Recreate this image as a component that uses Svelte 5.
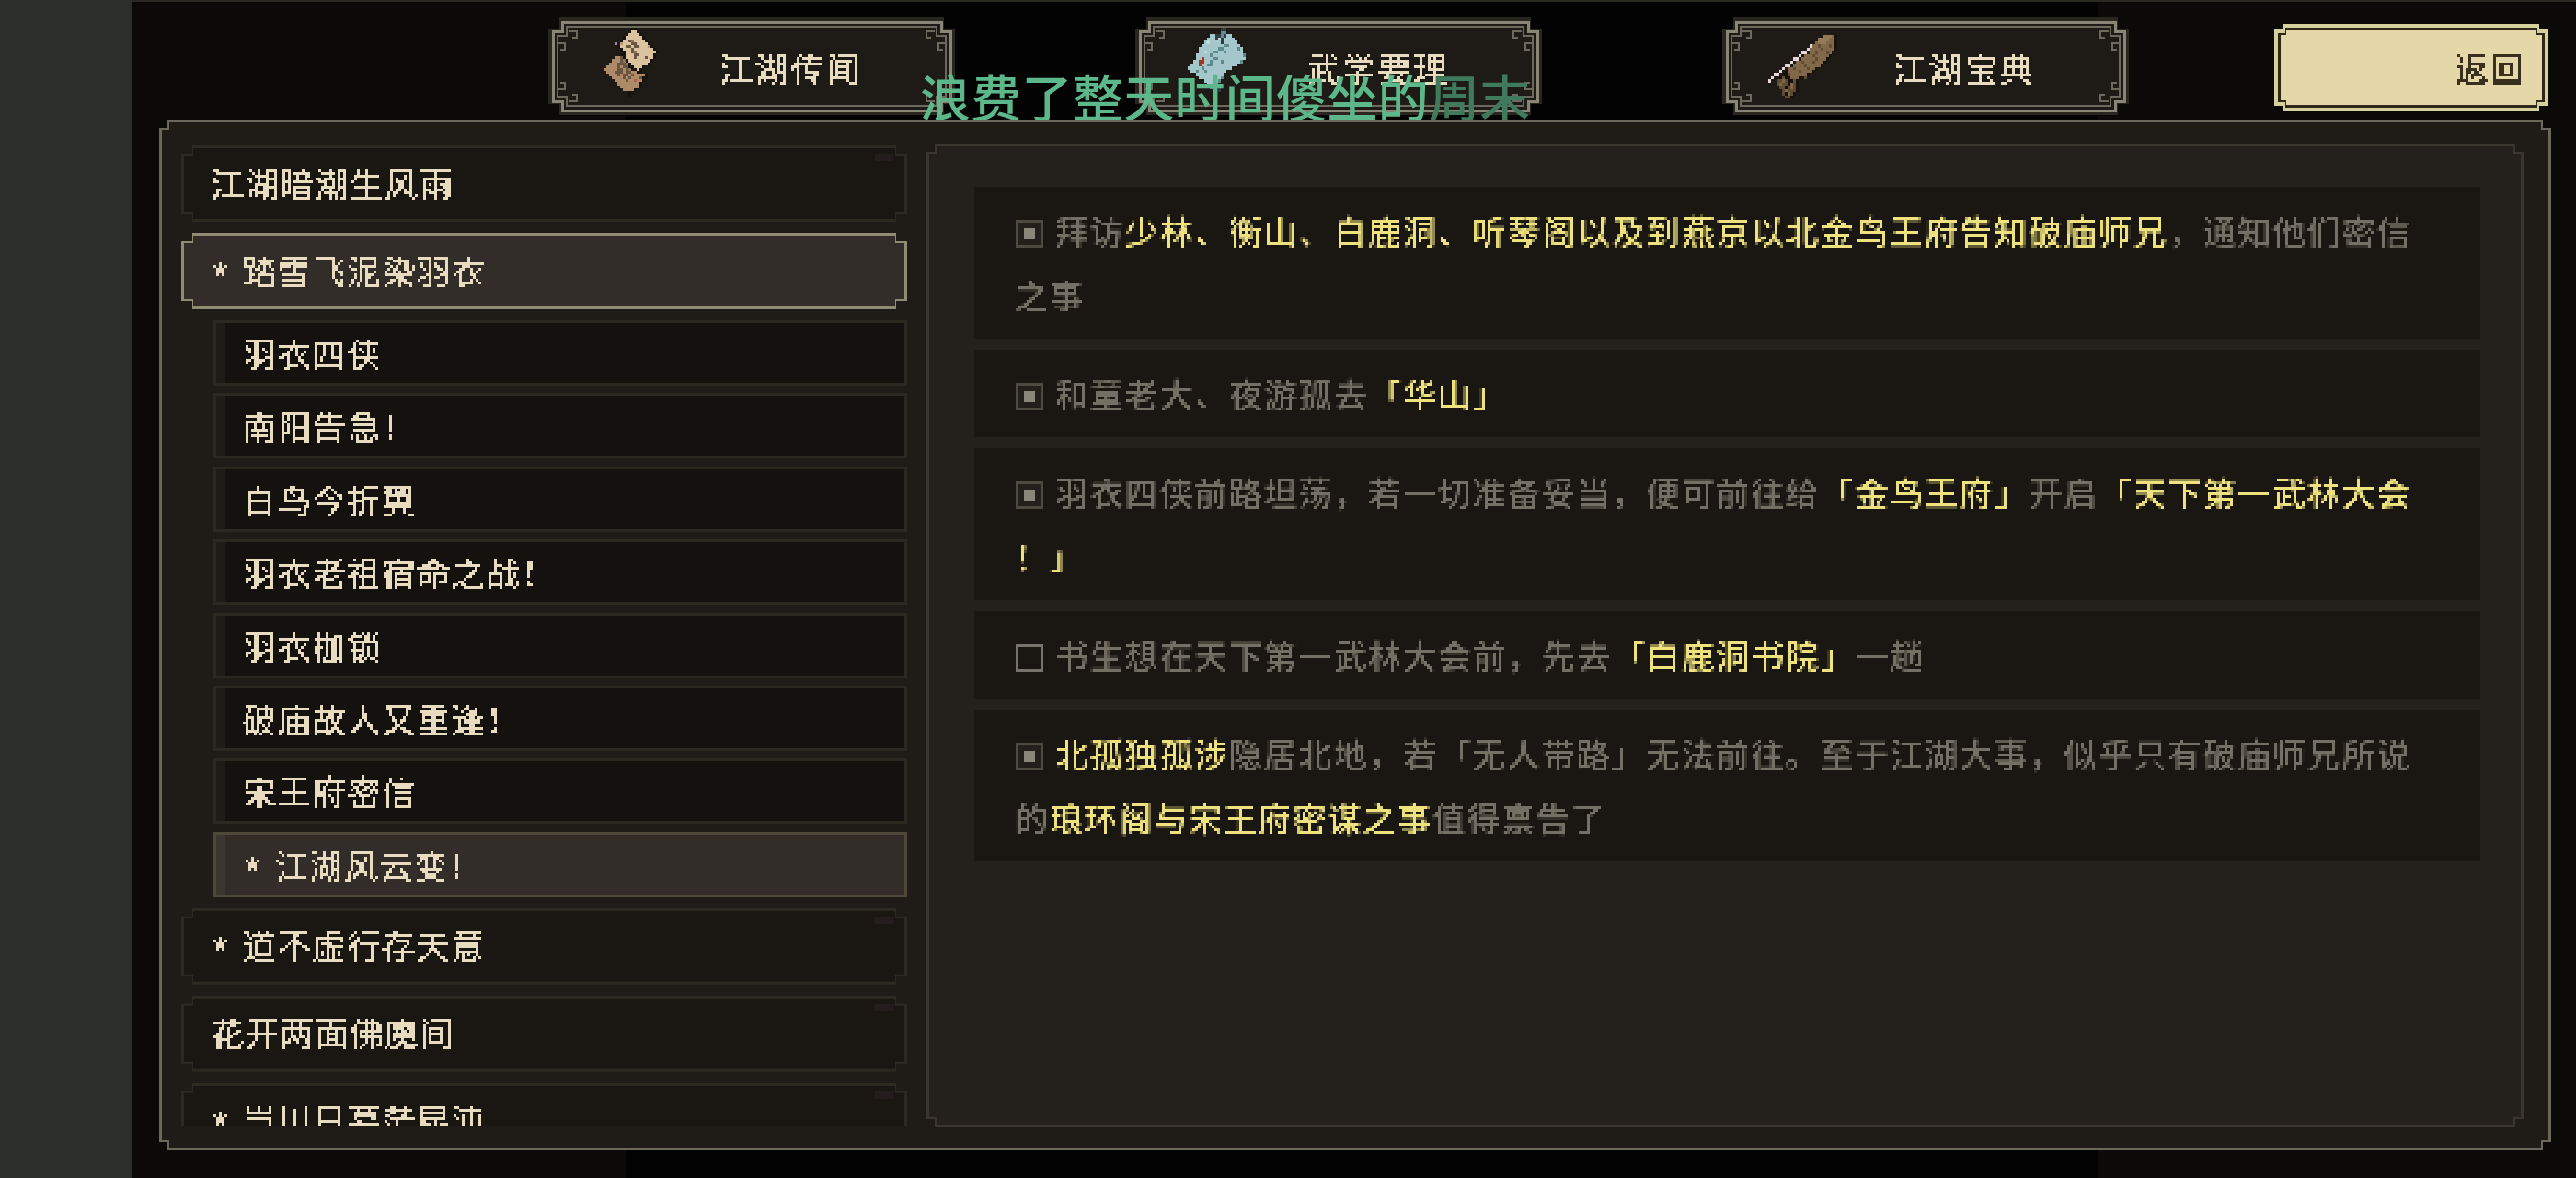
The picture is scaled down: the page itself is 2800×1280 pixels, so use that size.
<script>
	const W = 442;
	const H = 106;

	// stepped outline of a tab frame, i = inset from the outer edge
	function framePath(i, s = 10) {
		return `M${i + s} ${i}H${W - i - s}V${i + s}H${W - i}V${H - i - s}H${W - i - s}V${H - i}H${i + s}V${H - i - s}H${i}V${i + s}H${i + s}Z`;
	}

	const corners = [
		'',
		`translate(${W},0) scale(-1,1)`,
		`translate(0,${H}) scale(1,-1)`,
		`translate(${W},${H}) scale(-1,-1)`
	];

	const palette = {
		k: '#17120d', a: '#dcc3a0', b: '#b89b7a', c: '#ae8b68', d: '#6a5540', e: '#8a7556', r: '#b0604f', p: '#9a86a0',
		t: '#a3c7ca', l: '#bfdadc', g: '#5f8a90', x: '#2f3b3e', R: '#a8352a',
		n: '#806848', m: '#957a55', o: '#5d4a33', w: '#e8d5dc', q: '#644e33'
	};

	const scrollIcon = [
		'..........kk..........',
		'.........kaak.........',
		'........kaaaak........',
		'.......kaaaaaak.......',
		'......kaadeaaaak......',
		'....p.baaaddaaaak.....',
		'.....kaaddaddaaabk....',
		'......kaaadaaaaaaak...',
		'.......kaadeaaaaaaak..',
		'......kkaaaddaaaaak...',
		'....ccdkaaadaaadaak...',
		'...cccdekaaaaaaaak....',
		'..cccdddekaaaaaak.....',
		'.ccccdcddkkaaak.......',
		'cccccddcdekkak........',
		'.cccdddcddcckk........',
		'..cccdcddcdcccck......',
		'...ccccdcdcccdkk......',
		'....ccccdccrcck.......',
		'.....cccccccck........',
		'......ccccccck........',
		'.......cccck..........',
		'.........kk...........',
		'.........k............'
	];

	const bookIcon = [
		'............xx..........',
		'............gg..........',
		'........ttxxgxtt........',
		'.......tttxlxtttt.......',
		'......tlttttxttttt......',
		'.....ttttttttggtttt.....',
		'....tttttttggtttttgt....',
		'....ttlttggttgtttttt....',
		'...tttttgtttttttttttg...',
		'...ttRtttggtttttttttt...',
		'..ttRRttgtttgttttttg....',
		'.tttRttggttttttttt......',
		'tttttgtttttttttt........',
		'.ttgttgttttttt..........',
		'...tttttttttt...........',
		'....ttttttttg...........',
		'......tttttg............',
		'.......ttgg.............',
		'........gg.x............',
		'...........x............'
	];

	const rollIcon = [
		'....................mmmnk.',
		'..................mmmmnnk.',
		'.................nmmmnnnk.',
		'...............wnnqnnnqnk.',
		'..............wnnnnqnnnnk.',
		'............ww.nnqnnnqnk..',
		'...........w.nnnqnnnnnk...',
		'.........ww.nnnnnqnnnk....',
		'........w.nnqnnnqnnnk.....',
		'......ww.nnnnqnnnnnk......',
		'.....w.nnqnnnnqnnk........',
		'....w.knnnnqnnnnk.........',
		'..ww.kkonnnnnnk...........',
		'.w..kqkknnnk.o............',
		'w..oqnokkqk...............',
		'...onqoknok...............',
		'....oqkonok...............',
		'.....onoqok...............',
		'.....oknok................',
		'......ook.................'
	];

	function cells(rows) {
		const out = [];
		rows.forEach((row, y) => {
			[...row].forEach((ch, x) => {
				if (palette[ch]) out.push({ x, y, c: palette[ch] });
			});
		});
		return out;
	}

	const tabs = [
		{ label: '江湖传闻', rows: scrollIcon, cols: 22, w: 66, h: 75, nudge: 'icon-a' },
		{ label: '武学要理', rows: bookIcon, cols: 24, w: 72, h: 70, nudge: 'icon-b' },
		{ label: '江湖宝典', rows: rollIcon, cols: 26, w: 78, h: 69, nudge: 'icon-c' }
	];

	const subs = ['羽衣四侠', '南阳告急！', '白鸟今折翼', '羽衣老祖宿命之战！', '羽衣枷锁', '破庙故人又重逢！', '宋王府密信'];
</script>

{#snippet tabFrame()}
	<svg class="tab-frame" width={W} height={H} viewBox="0 0 {W} {H}" shape-rendering="crispEdges">
		<path d={framePath(0, 12)} fill="#29261f" />
		<path d={framePath(5)} fill="#1e1a15" stroke="#8a8677" stroke-width="3" />
		<path d={framePath(10)} fill="none" stroke="#6d695d" stroke-width="2" />
		{#each corners as t}
			<g transform={t} fill="none" stroke="#6d695d" stroke-width="2">
				<path d="M22 15H31V22H26" />
				<path d="M11 28H18V35H13" />
			</g>
		{/each}
	</svg>
{/snippet}

<svg class="defs" width="0" height="0" aria-hidden="true">
	<filter id="px" x="0" y="0" width="100%" height="100%" color-interpolation-filters="sRGB">
		<feFlood x="1" y="1" width="1" height="1" flood-color="#000" />
		<feComposite width="3" height="3" />
		<feTile result="grid" />
		<feComposite in="SourceGraphic" in2="grid" operator="in" />
		<feMorphology operator="dilate" radius="1" />
		<feComponentTransfer>
			<feFuncA type="discrete" tableValues="0 1 1 1" />
		</feComponentTransfer>
		<feGaussianBlur stdDeviation="0.4" />
	</filter>
</svg>

<div class="page">
	<div class="strip"></div>
	<div class="stage">
		<header class="top">
			<div class="tabs">
				{#each tabs as tab}
					<div class="tab">
						{@render tabFrame()}
						<svg class="icon {tab.nudge}" width={tab.w} height={tab.h} viewBox="0 0 {tab.cols} {tab.rows.length}" preserveAspectRatio="none" shape-rendering="crispEdges">
							{#each cells(tab.rows) as p}
								<rect x={p.x} y={p.y} width="1" height="1" fill={p.c} />
							{/each}
						</svg>
						<span class="tab-label px">{tab.label}</span>
					</div>
				{/each}
			</div>
			<div class="back">
				<div class="back-line">
					<div class="back-fill"><span class="px">返回</span></div>
				</div>
			</div>
		</header>

		<div class="toast">浪费了整天时间傻坐的<span class="toast-fade">周末</span></div>

		<section class="panel">
			<div class="panel-in">
				<nav class="list">
					<div class="item"><div class="item-in"><span class="px">江湖暗潮生风雨</span></div></div>
					<div class="item active"><div class="item-in"><span class="px"><i>*</i>踏雪飞泥染羽衣</span></div></div>
					<div class="subs">
						{#each subs as s}
							<div class="sub"><span class="px">{s}</span></div>
						{/each}
						<div class="sub current"><span class="px"><i>*</i>江湖风云变！</span></div>
					</div>
					<div class="item"><div class="item-in"><span class="px"><i>*</i>道不虚行存天意</span></div></div>
					<div class="item"><div class="item-in"><span class="px">花开两面佛魔间</span></div></div>
					<div class="item"><div class="item-in"><span class="px"><i>*</i>岂川日暮茫昆沌</span></div></div>
				</nav>

				<div class="detail">
					<div class="detail-in">
						<p class="row px"><b class="box on"></b>拜访<em>少林、衡山、白鹿洞、听琴阁以及到燕京以北金鸟王府告知破庙师兄</em>，通知他们密信之事</p>
						<p class="row px"><b class="box on"></b>和童老大、夜游孤去<em>「华山」</em></p>
						<p class="row px"><b class="box on"></b>羽衣四侠前路坦荡，若一切准备妥当，便可前往给<em>「金鸟王府」</em>开启<em>「天下第一武林大会！」</em></p>
						<p class="row px"><b class="box"></b>书生想在天下第一武林大会前，先去<em>「白鹿洞书院」</em>一趟</p>
						<p class="row px"><b class="box on"></b><em>北孤独孤涉</em>隐居北地，若「无人带路」无法前往。至于江湖大事，似乎只有破庙师兄所说的<em>琅环阁与宋王府密谋之事</em>值得禀告了</p>
					</div>
				</div>
			</div>
		</section>
	</div>
</div>

<style>
	:global(body) {
		margin: 0;
		background: #0b0a09;
	}

	.defs {
		position: absolute;
	}

	.page {
		display: flex;
		width: 2800px;
		height: 1280px;
		overflow: hidden;
		font-family: 'Noto Sans CJK SC', 'Noto Sans', sans-serif;
		font-size: 36px;
		font-weight: 400;
		letter-spacing: 1.8px;
		position: relative;
	}

	.px {
		filter: url(#px);
	}

	.strip {
		width: 143px;
		flex: none;
		background: #2c2e2a;
	}

	.stage {
		flex: 1;
		box-sizing: border-box;
		border-top: 2px solid #292823;
		background: linear-gradient(to right, #0b0a09 537px, #040303 537px, #040303 2137px, #0b0a09 2137px);
	}

	/* Top bar */
	.top {
		display: flex;
		height: 128px;
		box-sizing: border-box;
		padding: 17px 0 0 453px;
	}

	.tabs {
		display: flex;
		gap: 196px;
	}

	.tab {
		position: relative;
		width: 442px;
		height: 106px;
		display: flex;
		align-items: center;
		padding-left: 186px;
		box-sizing: border-box;
		color: #e7dcc0;
	}

	.tab-frame {
		position: absolute;
		left: 0;
		top: 0;
	}

	.tab-label {
		position: relative;
		display: block;
		line-height: 52px;
		margin-top: 2px;
		letter-spacing: 2.8px;
	}

	.icon {
		position: absolute;
	}

	.icon-a {
		left: 60px;
		top: 11px;
	}

	.icon-b {
		left: 57px;
		top: 11px;
	}

	.icon-c {
		left: 50px;
		top: 19px;
	}

	.back {
		margin: 7px 0 0 158px;
		width: 298px;
		height: 95px;
		background: #d6d19c;
		padding: 4px;
		box-sizing: border-box;
		clip-path: polygon(10px 0, calc(100% - 10px) 0, calc(100% - 10px) 6px, 100% 6px, 100% calc(100% - 6px), calc(100% - 10px) calc(100% - 6px), calc(100% - 10px) 100%, 10px 100%, 10px calc(100% - 6px), 0 calc(100% - 6px), 0 6px, 10px 6px);
	}

	.back-line {
		height: 100%;
		background: #2e2818;
		padding: 3px;
		box-sizing: border-box;
		clip-path: polygon(8px 0, calc(100% - 8px) 0, calc(100% - 8px) 6px, 100% 6px, 100% calc(100% - 6px), calc(100% - 8px) calc(100% - 6px), calc(100% - 8px) 100%, 8px 100%, 8px calc(100% - 6px), 0 calc(100% - 6px), 0 6px, 8px 6px);
	}

	.back-fill {
		height: 100%;
		background: #e5d8a8;
		color: #3a3020;
		display: flex;
		align-items: center;
		justify-content: flex-end;
		padding-right: 18px;
		box-sizing: border-box;
		font-weight: 500;
		clip-path: polygon(6px 0, calc(100% - 6px) 0, calc(100% - 6px) 5px, 100% 5px, 100% calc(100% - 5px), calc(100% - 6px) calc(100% - 5px), calc(100% - 6px) 100%, 6px 100%, 6px calc(100% - 5px), 0 calc(100% - 5px), 0 5px, 6px 5px);
	}

	.back-fill span {
		display: block;
		line-height: 52px;
		margin-top: -2px;
		letter-spacing: 2.4px;
	}

	/* Toast over the tabs */
	.toast {
		position: absolute;
		left: 1000px;
		top: 63px;
		font-size: 55px;
		font-weight: 500;
		letter-spacing: 0.3px;
		line-height: 80px;
		color: #5cb88a;
		white-space: nowrap;
	}

	.toast-fade {
		color: #3e7a5b;
	}

	/* Main panel */
	.panel {
		margin-left: 30px;
		width: 2600px;
		height: 1120px;
		padding: 3px;
		box-sizing: border-box;
		background: #6b675a;
		clip-path: polygon(9px 0, calc(100% - 9px) 0, calc(100% - 9px) 9px, 100% 9px, 100% calc(100% - 9px), calc(100% - 9px) calc(100% - 9px), calc(100% - 9px) 100%, 9px 100%, 9px calc(100% - 9px), 0 calc(100% - 9px), 0 9px, 9px 9px);
	}

	.panel-in {
		height: 100%;
		background: #1f1c17;
		display: flex;
		gap: 21px;
		padding: 23px 27px 22px 21px;
		box-sizing: border-box;
		clip-path: polygon(8px 0, calc(100% - 8px) 0, calc(100% - 8px) 8px, 100% 8px, 100% calc(100% - 8px), calc(100% - 8px) calc(100% - 8px), calc(100% - 8px) 100%, 8px 100%, 8px calc(100% - 8px), 0 calc(100% - 8px), 0 8px, 8px 8px);
	}

	.list {
		width: 789px;
		flex: none;
		margin: 2px 0;
		display: flex;
		flex-direction: column;
		gap: 12px;
		overflow: hidden;
		color: #e7dcc0;
	}

	.list span {
		display: block;
		line-height: 52px;
		margin-top: -4px;
	}

	.list i {
		display: inline-block;
		width: 35px;
		font-style: normal;
		font-size: 44px;
		line-height: 40px;
		position: relative;
		top: 11px;
	}

	.item {
		height: 83px;
		flex: none;
		padding: 3px;
		box-sizing: border-box;
		background: #2c2921;
		clip-path: polygon(12px 0, calc(100% - 12px) 0, calc(100% - 12px) 9px, 100% 9px, 100% calc(100% - 9px), calc(100% - 12px) calc(100% - 9px), calc(100% - 12px) 100%, 12px 100%, 12px calc(100% - 9px), 0 calc(100% - 9px), 0 9px, 12px 9px);
	}

	.item-in {
		height: 100%;
		display: flex;
		align-items: center;
		padding-left: 29px;
		box-sizing: border-box;
		background: linear-gradient(#241c1d, #241c1d) no-repeat right 12px top 6px / 20px 8px, #1a1713;
		clip-path: polygon(10px 0, calc(100% - 10px) 0, calc(100% - 10px) 8px, 100% 8px, 100% calc(100% - 8px), calc(100% - 10px) calc(100% - 8px), calc(100% - 10px) 100%, 10px 100%, 10px calc(100% - 8px), 0 calc(100% - 8px), 0 8px, 10px 8px);
	}

	.active {
		background: #8f8b75;
	}

	.active .item-in {
		background: #322d28;
	}

	.subs {
		margin-left: 35px;
		display: flex;
		flex-direction: column;
		gap: 8.4px;
	}

	.sub {
		height: 71px;
		flex: none;
		box-sizing: border-box;
		border: 3px solid #2b2820;
		padding-left: 29px;
		display: flex;
		align-items: center;
		background: linear-gradient(to right, #1f1c17 10px, #14110e 10px);
	}

	.list .sub span {
		margin-top: -1px;
	}

	.current {
		border-color: #4d483a;
		background: linear-gradient(to right, #3a3630 10px, #322d28 10px);
	}

	/* Task detail */
	.detail {
		flex: 1;
		padding: 3px;
		box-sizing: border-box;
		background: #3a362d;
		clip-path: polygon(9px 0, calc(100% - 9px) 0, calc(100% - 9px) 9px, 100% 9px, 100% calc(100% - 9px), calc(100% - 9px) calc(100% - 9px), calc(100% - 9px) 100%, 9px 100%, 9px calc(100% - 9px), 0 calc(100% - 9px), 0 9px, 9px 9px);
	}

	.detail-in {
		height: 100%;
		background: #24201b;
		box-sizing: border-box;
		padding: 44px 44px 0 49px;
		display: flex;
		flex-direction: column;
		gap: 12px;
		clip-path: polygon(8px 0, calc(100% - 8px) 0, calc(100% - 8px) 8px, 100% 8px, 100% calc(100% - 8px), calc(100% - 8px) calc(100% - 8px), calc(100% - 8px) 100%, 8px 100%, 8px calc(100% - 8px), 0 calc(100% - 8px), 0 8px, 8px 8px);
	}

	.row {
		margin: 0;
		background: #1a1713;
		padding: 12px 60px 13px 44px;
		line-height: 70px;
		color: #757065;
		font-weight: 500;
		line-break: anywhere;
	}

	.row em {
		font-style: normal;
		color: #eee27e;
	}

	.box {
		display: inline-block;
		box-sizing: border-box;
		width: 30px;
		height: 29px;
		margin-right: 14px;
		vertical-align: -2px;
		border: 3px solid #77726a;
	}

	.box.on {
		border-color: #4f4a3f;
		background: linear-gradient(#8a867a, #8a867a) no-repeat center / 11px 12px, #23201b;
	}
</style>
